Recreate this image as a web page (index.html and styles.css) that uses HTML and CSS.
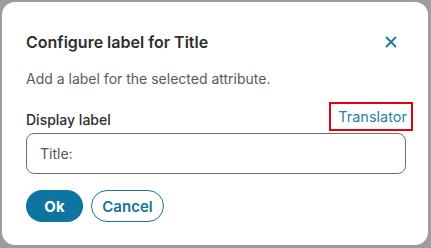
FILE: index.html
```html
<!DOCTYPE html>
<html>
<head>
<meta charset="utf-8">
<link rel="stylesheet" href="styles.css">
</head>
<body>
<div class="dialog">
  <div class="header">
    <h2 class="title">Configure label for Title</h2>
    <button class="close" aria-label="Close">
      <svg width="12" height="12" viewBox="0 0 12 12"><path d="M1.5 1.5 L10.5 10.5 M10.5 1.5 L1.5 10.5" stroke="#1a7a9c" stroke-width="1.8" stroke-linecap="round"/></svg>
    </button>
  </div>
  <p class="desc">Add a label for the selected attribute.</p>
  <div class="label-row">
    <span class="label">Display label</span>
    <a class="translator">Translator</a>
  </div>
  <div class="input">Title:</div>
  <div class="actions">
    <button class="btn primary">Ok</button>
    <button class="btn secondary">Cancel</button>
  </div>
</div>
</body>
</html>
```
FILE: styles.css
```css
html, body { margin: 0; padding: 0; }
body {
  width: 431px;
  height: 248px;
  background: #9d9d9d;
  font-family: Inter, "Noto Sans", sans-serif;
  padding: 2px 3px 3px 2px;
  box-sizing: border-box;
}
.dialog {
  background: #fff;
  border-radius: 13px;
  height: 243px;
  box-sizing: border-box;
  padding: 29px 22px 0 24px;
}
.header {
  display: flex;
  justify-content: space-between;
  align-items: center;
  height: 22px;
}
.title {
  margin: 0;
  font-size: 16px;
  font-weight: 600;
  color: #2e2e2e;
}
.close {
  border: none;
  background: none;
  padding: 0;
  width: 12px;
  height: 12px;
  margin-right: 9px;
  display: flex;
}
.desc {
  margin: 17px 0 0 0;
  font-size: 14px;
  color: #5a5a5a;
  line-height: 18px;
}
.label-row {
  display: flex;
  justify-content: space-between;
  align-items: center;
  margin-top: 14px;
}
.label {
  font-size: 14px;
  font-weight: 500;
  color: #2e2e2e;
  margin-top: 5px;
}
.translator {
  font-size: 14.5px;
  color: #2a7fa5;
  border: 2px solid #e3000f;
  padding: 3px 4px 3px 7px;
  margin-right: -7px;
  line-height: 19px;
}
.input {
  margin-top: 2px;
  height: 41px;
  box-sizing: border-box;
  border: 1px solid #6e6e6e;
  border-radius: 8px;
  padding: 0 13px;
  display: flex;
  align-items: center;
  font-size: 14px;
  color: #555;
}
.actions {
  display: flex;
  gap: 8px;
  margin-top: 16px;
}
.btn {
  font-family: Inter, "Noto Sans", sans-serif;
  font-size: 15px;
  font-weight: 700;
  height: 32px;
  border-radius: 16px;
  box-sizing: border-box;
  cursor: pointer;
}
.primary {
  background: #0e75a0;
  color: #fff;
  border: none;
  width: 57px;
}
.secondary {
  background: #fff;
  color: #1a7399;
  border: 1px solid #1a7399;
  width: 73px;
  font-weight: 600;
}
```
